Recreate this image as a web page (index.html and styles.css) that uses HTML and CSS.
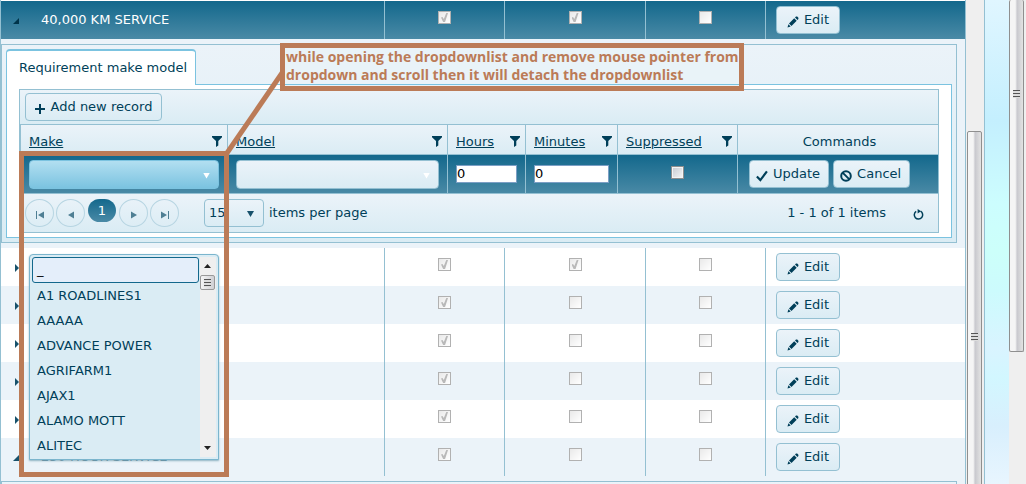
FILE: index.html
```
<!DOCTYPE html>
<html lang="en">
<head>
    <meta charset="UTF-8">
    <meta name="viewport" content="width=device-width, initial-scale=1.0">
    <title>Service Requirements</title>
    <link rel="stylesheet" href="styles.css">
</head>
<body>
    <!-- shared icons -->
    <svg class="sprite" aria-hidden="true">
        <symbol id="pencil" viewBox="0 0 12 12"><path d="M2 7.5 7.2 2.3l2.5 2.5L4.5 10zM1.4 8.3l2.3 2.3L.5 11.5zM8 1.5 9 .6h1.2l1.2 1.2V3l-.9.9z"/></symbol>
        <symbol id="plus" viewBox="0 0 10 10"><path d="M4 0h2v4h4v2H6v4H4V6H0V4h4z"/></symbol>
        <symbol id="funnel" viewBox="0 0 10 11"><path d="M0 0h10v1.2L6.3 5v4.6L4 11V5L0 1.2z"/></symbol>
        <symbol id="tick" viewBox="0 0 11 10"><path d="M.8 5.5 4 8.7 10 .8" fill="none" stroke="currentColor" stroke-width="2"/></symbol>
        <symbol id="ban" viewBox="0 0 12 12"><g fill="none" stroke="currentColor" stroke-width="2"><circle cx="6" cy="6" r="4.8"/><path d="M2.6 2.6l6.8 6.8"/></g></symbol>
        <symbol id="refresh" viewBox="0 0 11 11"><path d="M7.6 2.2A4.2 4.2 0 1 1 3.2 2.3" fill="none" stroke="currentColor" stroke-width="1.5"/><path d="M4.6 0v4.6L8 2.2z"/></symbol>
        <symbol id="first" viewBox="0 0 8 8"><path d="M0 0h1v8H0zM8 0.5v7L2 4z"/></symbol>
        <symbol id="prev" viewBox="0 0 8 8"><path d="M7 0.5v7L1 4z"/></symbol>
        <symbol id="next" viewBox="0 0 8 8"><path d="M1 0.5v7L7 4z"/></symbol>
        <symbol id="last" viewBox="0 0 8 8"><path d="M7 0h1v8H7zM0 0.5v7L6 4z"/></symbol>
    </svg>

    <div class="page">
        <main class="pane">
            <table class="services">
                <colgroup>
                    <col class="c-arrow"><col class="c-name"><col class="c-check"><col class="c-mid"><col class="c-check"><col>
                </colgroup>
                <tbody>
                    <tr class="selected">
                        <td class="toggle"><span class="open"></span></td>
                        <td class="name">40,000 KM SERVICE</td>
                        <td><input type="checkbox" aria-label="Active" checked disabled></td>
                        <td><input type="checkbox" aria-label="Recurring" checked disabled></td>
                        <td><input type="checkbox" aria-label="Suppressed" disabled></td>
                        <td class="cmd"><button class="btn"><svg><use href="#pencil"/></svg>Edit</button></td>
                    </tr>
                    <tr class="detail-row">
                        <td colspan="6">
                            <div class="detail">
                                <a class="tab" href="#models">Requirement make model</a>
                                <div class="tab-content" id="models">
                                    <div class="grid">
                                        <div class="toolbar">
                                            <button class="btn add"><svg><use href="#plus"/></svg>Add new record</button>
                                        </div>
                                        <table class="models">
                                            <colgroup>
                                                <col class="m-make"><col class="m-model"><col class="m-hours"><col class="m-minutes"><col class="m-supp"><col>
                                            </colgroup>
                                            <thead>
                                                <tr>
                                                    <th><div><a href="#make">Make</a><svg><use href="#funnel"/></svg></div></th>
                                                    <th><div><a href="#model">Model</a><svg><use href="#funnel"/></svg></div></th>
                                                    <th><div><a href="#hours">Hours</a><svg><use href="#funnel"/></svg></div></th>
                                                    <th><div><a href="#minutes">Minutes</a><svg><use href="#funnel"/></svg></div></th>
                                                    <th><div><a href="#supp">Suppressed</a><svg><use href="#funnel"/></svg></div></th>
                                                    <th class="center">Commands</th>
                                                </tr>
                                            </thead>
                                            <tbody>
                                                <tr>
                                                    <td><div class="drop active"><select aria-label="Make"><option></option></select></div></td>
                                                    <td><div class="drop"><select aria-label="Model"><option></option></select></div></td>
                                                    <td><input type="text" aria-label="Hours" value="0"></td>
                                                    <td><input type="text" aria-label="Minutes" value="0"></td>
                                                    <td class="center"><input type="checkbox" class="live" aria-label="Suppressed"></td>
                                                    <td>
                                                        <div class="commands">
                                                            <button class="btn small"><svg><use href="#tick"/></svg>Update</button>
                                                            <button class="btn small"><svg><use href="#ban"/></svg>Cancel</button>
                                                        </div>
                                                    </td>
                                                </tr>
                                            </tbody>
                                        </table>
                                        <div class="pager">
                                            <button class="nav" aria-label="First page"><svg><use href="#first"/></svg></button>
                                            <button class="nav" aria-label="Previous page"><svg><use href="#prev"/></svg></button>
                                            <button class="current">1</button>
                                            <button class="nav" aria-label="Next page"><svg><use href="#next"/></svg></button>
                                            <button class="nav" aria-label="Last page"><svg><use href="#last"/></svg></button>
                                            <div class="drop size"><select id="size"><option>15</option></select></div>
                                            <label for="size">items per page</label>
                                            <span class="info">1 - 1 of 1 items</span>
                                            <button class="refresh" aria-label="Refresh"><svg><use href="#refresh"/></svg></button>
                                        </div>
                                    </div>
                                </div>
                            </div>
                        </td>
                    </tr>
                    <tr>
                        <td class="toggle"><span></span></td>
                        <td class="name"></td>
                        <td><input type="checkbox" aria-label="Active" checked disabled></td>
                        <td><input type="checkbox" aria-label="Recurring" checked disabled></td>
                        <td><input type="checkbox" aria-label="Suppressed" disabled></td>
                        <td class="cmd"><button class="btn"><svg><use href="#pencil"/></svg>Edit</button></td>
                    </tr>
                    <tr class="alt">
                        <td class="toggle"><span></span></td>
                        <td class="name"></td>
                        <td><input type="checkbox" aria-label="Active" checked disabled></td>
                        <td><input type="checkbox" aria-label="Recurring" disabled></td>
                        <td><input type="checkbox" aria-label="Suppressed" disabled></td>
                        <td class="cmd"><button class="btn"><svg><use href="#pencil"/></svg>Edit</button></td>
                    </tr>
                    <tr>
                        <td class="toggle"><span></span></td>
                        <td class="name"></td>
                        <td><input type="checkbox" aria-label="Active" checked disabled></td>
                        <td><input type="checkbox" aria-label="Recurring" disabled></td>
                        <td><input type="checkbox" aria-label="Suppressed" disabled></td>
                        <td class="cmd"><button class="btn"><svg><use href="#pencil"/></svg>Edit</button></td>
                    </tr>
                    <tr class="alt">
                        <td class="toggle"><span></span></td>
                        <td class="name"></td>
                        <td><input type="checkbox" aria-label="Active" checked disabled></td>
                        <td><input type="checkbox" aria-label="Recurring" disabled></td>
                        <td><input type="checkbox" aria-label="Suppressed" disabled></td>
                        <td class="cmd"><button class="btn"><svg><use href="#pencil"/></svg>Edit</button></td>
                    </tr>
                    <tr>
                        <td class="toggle"><span></span></td>
                        <td class="name"></td>
                        <td><input type="checkbox" aria-label="Active" checked disabled></td>
                        <td><input type="checkbox" aria-label="Recurring" disabled></td>
                        <td><input type="checkbox" aria-label="Suppressed" disabled></td>
                        <td class="cmd"><button class="btn"><svg><use href="#pencil"/></svg>Edit</button></td>
                    </tr>
                    <tr class="alt">
                        <td class="toggle"><span class="open"></span></td>
                        <td class="name">250 HOUR SERVICE</td>
                        <td><input type="checkbox" aria-label="Active" checked disabled></td>
                        <td><input type="checkbox" aria-label="Recurring" disabled></td>
                        <td><input type="checkbox" aria-label="Suppressed" disabled></td>
                        <td class="cmd"><button class="btn"><svg><use href="#pencil"/></svg>Edit</button></td>
                    </tr>
                    <tr class="detail-row">
                        <td colspan="6"><div class="detail"></div></td>
                    </tr>
                </tbody>
            </table>
        </main>
        <div class="scrollbar inner"><div class="thumb"><i></i></div></div>
        <div class="backdrop"></div>
        <div class="scrollbar outer"><div class="thumb"><i></i></div></div>
    </div>

    <!-- open list of the Make drop-down -->
    <div class="popup">
        <ul>
            <li class="focused">_</li>
            <li>A1 ROADLINES1</li>
            <li>AAAAA</li>
            <li>ADVANCE POWER</li>
            <li>AGRIFARM1</li>
            <li>AJAX1</li>
            <li>ALAMO MOTT</li>
            <li>ALITEC</li>
        </ul>
        <div class="list-scroll"><span class="up"></span><div class="list-thumb"><i></i></div><span class="down"></span></div>
    </div>

    <!-- callout -->
    <div class="frame"></div>
    <svg class="pointer"><path d="M55 0 0 80"/></svg>
    <p class="note">while opening the dropdownlist and remove mouse pointer from<br>dropdown and scroll then it will detach the dropdownlist</p>
</body>
</html>
```
FILE: styles.css
```
* {
    box-sizing: border-box;
}
body {
    margin: 0;
    background: #fff;
    color: #003f59;
    font-family: "DejaVu Sans", Verdana, sans-serif;
    font-size: 13px;
    line-height: 18px;
    overflow: hidden;
}
button, input, select {
    font: inherit;
    color: inherit;
    margin: 0;
}
a {
    color: inherit;
}
svg {
    fill: currentColor;
    flex: none;
}
.sprite {
    display: none;
}
.page {
    display: flex;
    height: 100vh;
}
.pane {
    flex: 1;
    min-width: 0;
    overflow: hidden;
    padding-top: 1px;
    border: solid #94c0d2;
    border-width: 0 1px;
}

/* tables */
table {
    width: 100%;
    table-layout: fixed;
    border-collapse: separate;
    border-spacing: 0;
}
td, th {
    padding: 0;
    font-weight: normal;
}
.c-arrow { width: 32px; }
.c-name { width: 351px; }
.c-check { width: 120px; }
.c-mid { width: 141px; }
.services > tbody > tr > td {
    height: 38px;
    border-left: 1px solid #94c0d2;
    text-align: center;
    vertical-align: top;
    padding-top: 10px;
}
.services > tbody > tr > td.toggle,
.services > tbody > tr > td.name {
    border-left: 0;
    text-align: left;
}
.services > tbody > tr > td.name {
    padding-left: 8px;
}
.services > tbody > tr > td.cmd {
    padding: 5px 10px;
    text-align: left;
}
.services > tbody > tr.detail-row > td {
    padding: 5px 8px 5px 0;
    border-left: 0;
    text-align: left;
    background: #ebf3f9;
}
.alt {
    background: #ebf3f9;
}
.selected, .models tbody tr {
    background: linear-gradient(#13688c, #4a8aa6);
}
.selected .name {
    color: #fff;
}
.toggle span {
    display: block;
    margin: 6px 0 0 14px;
    width: 4px;
    height: 8px;
    background: #17516b;
    clip-path: polygon(0 0, 100% 50%, 0 100%);
}
.toggle .open {
    margin: 7px 0 0 12px;
    width: 6px;
    height: 6px;
    clip-path: polygon(100% 0, 100% 100%, 0 100%);
}
.selected .open {
    background: #00344b;
}

/* check boxes */
input[type="checkbox"] {
    appearance: none;
    display: block;
    width: 13px;
    height: 13px;
    margin: 0 auto;
    border: 1px solid #b1b1b1;
    background: linear-gradient(135deg, #e9e9e9, #fff);
}
input[type="checkbox"]:checked::before {
    content: "";
    display: block;
    width: 7px;
    height: 9px;
    margin: 1px 2px;
    background: #b9b9b9;
    clip-path: polygon(0 50%, 22% 45%, 40% 68%, 75% 0, 100% 0, 58% 100%, 30% 100%);
}
input[type="checkbox"].live {
    border-color: #8e8f8f;
    background: linear-gradient(135deg, #c6cbd2, #f6f6f6);
    box-shadow: inset 0 0 0 1px #f4f4f4;
}
.models td.center {
    padding-bottom: 4px;
}

/* buttons */
.btn {
    display: flex;
    align-items: center;
    justify-content: center;
    width: 64px;
    height: 28px;
    padding: 0;
    border: 1px solid #94c0d2;
    border-radius: 4px;
    background: linear-gradient(#ebf3f9, #daecf4);
}
.btn svg {
    width: 12px;
    height: 12px;
    margin: 4px 5px 0 0;
}
.btn.add {
    width: 137px;
}
.btn.add svg {
    width: 10px;
    height: 10px;
    margin-right: 6px;
}
.btn.small {
    width: auto;
    padding: 0 8px 0 6px;
}

/* tab strip */
.detail {
    min-height: 40px;
    padding: 4px;
    border: 1px solid #94c0d2;
    background: linear-gradient(#ebf3f9, #daecf4);
}
.tab {
    display: block;
    position: relative;
    width: 190px;
    height: 36px;
    margin-bottom: -1px;
    padding: 8px 0 0 12px;
    border: 1px solid #7bc3e0;
    border-top-width: 2px;
    border-bottom: 0;
    border-radius: 4px 4px 0 0;
    background: #fff;
    text-decoration: none;
    white-space: nowrap;
}
.tab-content {
    padding: 4px 12px;
    border: 1px solid #7bc3e0;
    background: #fff;
}
.grid {
    border: 1px solid #94c0d2;
}
.toolbar {
    padding: 3px 5px;
    background: linear-gradient(#ebf3f9, #daecf4);
}
.m-make { width: 207px; }
.m-model { width: 220px; }
.m-hours { width: 78px; }
.m-minutes { width: 92px; }
.m-supp { width: 120px; }
.models th, .models td {
    border-left: 1px solid #94c0d2;
    border-bottom: 1px solid #94c0d2;
    text-align: left;
}
.models th {
    height: 31px;
    padding: 4px 5px 0 8px;
    border-top: 1px solid #94c0d2;
    background: linear-gradient(#ebf3f9, #daecf4);
}
.models th div {
    display: flex;
    justify-content: space-between;
    align-items: center;
}
.models th svg {
    width: 10px;
    height: 11px;
}
.models td {
    height: 39px;
    padding: 0 8px;
}
.models .center {
    text-align: center;
}
.models input[type="text"] {
    display: block;
    width: 100%;
    height: 18px;
    padding: 0;
    border: 1px solid #7c9fc5;
    border-radius: 0;
    background: #fff;
    color: #000;
}
.commands {
    display: flex;
    gap: 4px;
    padding-left: 3px;
}

/* drop-downs */
.drop {
    position: relative;
}
.drop select {
    appearance: none;
    display: block;
    width: 100%;
    height: 29px;
    padding: 0 5px;
    border: 1px solid #94c0d2;
    border-radius: 4px;
    background: linear-gradient(#ebf3f9, #daecf4);
}
.drop::after {
    content: "";
    position: absolute;
    right: 9px;
    top: 13px;
    width: 7px;
    height: 6px;
    background: #fff;
    clip-path: polygon(0 0, 100% 0, 50% 100%);
    pointer-events: none;
}
.drop.active select {
    border-color: #7bc3e0;
    background: linear-gradient(#b2dff1, #7bc3e0);
}
.size {
    width: 60px;
    margin: 0 5px 0 23px;
}
.drop.size select {
    height: 28px;
    padding: 0 4px;
}
.size::after {
    right: 10px;
    top: 12px;
    background: #17516b;
}

/* pager */
.pager {
    display: flex;
    align-items: center;
    height: 38px;
    padding: 0 14px 0 5px;
    background: linear-gradient(#ebf3f9, #daecf4);
}
.pager button {
    display: flex;
    align-items: center;
    justify-content: center;
    padding: 0;
}
.nav {
    width: 29px;
    height: 28px;
    margin-right: 2px;
    border: 1px solid #b7d5e2;
    border-radius: 50%;
    background: none;
    color: #4f7f94;
}
.nav svg {
    width: 8px;
    height: 8px;
    margin-top: 4px;
}
.current {
    align-self: flex-start;
    width: 28px;
    height: 23px;
    margin: 5px 3px 0 1px;
    border: 0;
    border-radius: 12px;
    background: linear-gradient(#13688c, #4a8aa6);
    color: #fff;
}
.info {
    margin-left: auto;
}
.refresh {
    margin-left: 27px;
    border: 0;
    background: none;
}
.refresh svg {
    width: 11px;
    height: 11px;
    margin-top: 2px;
}

/* scroll bars */
.scrollbar {
    flex: none;
    overflow: hidden;
    background: #efefef;
}
.inner {
    width: 18px;
    padding: 131px 2px 0 1px;
}
.outer {
    width: 17px;
    padding-right: 2px;
}
.thumb {
    display: flex;
    align-items: center;
    justify-content: center;
    border: 1px solid #8f8f8f;
    border-radius: 2px;
    background: linear-gradient(90deg, #f5f5f5 0 40%, #c9c9ce 55%, #e3e3e3);
}
.thumb i, .list-thumb i {
    width: 7px;
    height: 8px;
    background: repeating-linear-gradient(#555 0 1px, #ddd 1px 3px);
}
.inner .thumb {
    height: 412px;
}
.outer .thumb {
    height: 352px;
    padding-bottom: 164px;
    border-top: 0;
}
.backdrop {
    flex: none;
    width: 25px;
    border-left: 1px solid #94c0d2;
    background: linear-gradient(#e0f6ff, #c4effe 25%, #ccfdfe 42%, #ccfffa 52%, #ccfbfd 60%, #d9f4ff 72%, #d2f7ff 78%, #d8effd 88%, #e8f5fe);
}

/* popup list */
.popup {
    position: absolute;
    left: 29px;
    top: 254px;
    width: 190px;
    height: 206px;
    display: flex;
    padding: 2px;
    border: 1px solid #7bb5cd;
    border-radius: 4px 4px 0 0;
    background: #daecf4;
    box-shadow: 0 1px 2px #8fb3c3;
}
.popup ul {
    flex: 1;
    margin: 0;
    padding: 0;
    list-style: none;
    overflow: hidden;
}
.popup li {
    height: 25px;
    padding: 4px 5px 0;
}
.popup .focused {
    height: 26px;
    padding: 3px 4px 0;
    border: 1px solid #13688c;
    border-radius: 3px;
    background: #e4eefa;
    color: #000;
}
.list-scroll {
    display: flex;
    flex-direction: column;
    width: 16px;
    margin-left: 1px;
    background: #efefef;
}
.up, .down {
    width: 7px;
    height: 4px;
    margin: 7px 4px;
    background: #222;
    clip-path: polygon(50% 0, 100% 100%, 0 100%);
}
.down {
    margin-top: auto;
    clip-path: polygon(0 0, 100% 0, 50% 100%);
}
.list-thumb {
    display: flex;
    align-items: center;
    justify-content: center;
    width: 15px;
    height: 15px;
    border: 1px solid #999;
    border-radius: 2px;
    background: linear-gradient(90deg, #f5f5f5, #d0d0d4);
}

/* callout */
.frame {
    position: absolute;
    left: 19px;
    top: 151px;
    width: 210px;
    height: 326px;
    border: 5px solid #bb7b57;
    pointer-events: none;
}
.pointer {
    position: absolute;
    left: 227px;
    top: 73px;
    width: 56px;
    height: 80px;
    overflow: visible;
    fill: none;
    stroke: #bb7b57;
    stroke-width: 5px;
    pointer-events: none;
}
.note {
    position: absolute;
    left: 280px;
    top: 43px;
    width: 464px;
    height: 48px;
    margin: 0;
    padding-left: 1px;
    border: 5px solid #bb7b57;
    background: linear-gradient(transparent 36px, #7bc3e0 36px 37px, transparent 37px), #e9f3f8;
    color: #bb7b57;
    font-family: "Open Sans", "Noto Sans", sans-serif;
    font-size: 14px;
    font-weight: 700;
    line-height: 18px;
    white-space: nowrap;
}
```
